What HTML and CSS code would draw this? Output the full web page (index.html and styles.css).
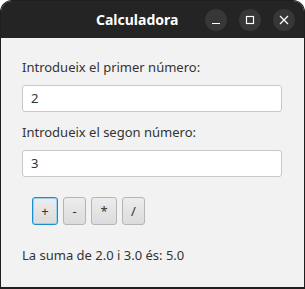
FILE: index.html
```html
<!DOCTYPE html>
<html lang="ca">
<head>
    <meta charset="UTF-8">
    <title>Calculadora</title>
    <link rel="stylesheet" href="styles.css">
</head>
<body>
    <div class="window">
        <header class="titlebar">
            <span class="title">Calculadora</span>
            <div class="controls">
                <span class="ctl">
                    <svg width="10" height="10" viewBox="0 0 10 10"><path d="M1 8.5h8" stroke="#fff" stroke-width="1.2"/></svg>
                </span>
                <span class="ctl">
                    <svg width="10" height="10" viewBox="0 0 10 10"><rect x="1.5" y="1.5" width="7" height="7" fill="none" stroke="#fff" stroke-width="1.2"/></svg>
                </span>
                <span class="ctl">
                    <svg width="10" height="10" viewBox="0 0 10 10"><path d="M1 1l8 8M9 1l-8 8" stroke="#fff" stroke-width="1.2"/></svg>
                </span>
            </div>
        </header>

        <section class="content">
            <label class="label">Introdueix el primer número:</label>
            <div class="field">2</div>

            <label class="label">Introdueix el segon número:</label>
            <div class="field">3</div>

            <div class="ops">
                <button class="op focused">+</button>
                <button class="op">-</button>
                <button class="op wide">*</button>
                <button class="op">/</button>
            </div>

            <p class="result">La suma de 2.0 i 3.0 és: 5.0</p>
        </section>
    </div>
</body>
</html>
```

FILE: styles.css
```css
body {
    margin: 0;
    padding: 0;
    background-color: #ffffff;
    font-family: "Noto Sans", "Open Sans", sans-serif;
}
.window {
    width: 305px;
    height: 289px;
    box-sizing: border-box;
    background-color: #f2f2f2;
    border: 1px solid #1f1f1f;
    border-bottom-width: 2px;
    border-radius: 12px 12px 0 0;
    overflow: hidden;
}
.titlebar {
    height: 37px;
    background-color: #242424;
    display: flex;
    align-items: center;
    position: relative;
}
.title {
    position: absolute;
    left: 95px;
    top: 9px;
    color: #ffffff;
    font-weight: bold;
    font-size: 14px;
}
.controls {
    margin-left: auto;
    margin-right: 9px;
    display: flex;
    gap: 12px;
}
.ctl {
    width: 22px;
    height: 22px;
    border-radius: 50%;
    background-color: #373737;
    display: flex;
    align-items: center;
    justify-content: center;
}
.content {
    padding: 20px 21px 0 21px;
    display: flex;
    flex-direction: column;
    align-items: flex-start;
}
.label {
    font-size: 13px;
    color: #333333;
    line-height: 18px;
}
.field {
    box-sizing: border-box;
    width: 260px;
    height: 27px;
    margin: 9px 0 11px 0;
    padding: 0 8px;
    background-color: #ffffff;
    border: 1px solid #c8c8c8;
    border-radius: 3px;
    font-size: 13px;
    line-height: 25px;
    color: #333333;
}
.ops {
    display: flex;
    gap: 5px;
    margin: 9px 0 0 10px;
}
.op {
    box-sizing: border-box;
    width: 23px;
    height: 28px;
    padding: 0;
    background: linear-gradient(#ececec, #dcdcdc);
    border: 1px solid #b5b5b5;
    border-radius: 3px;
    font-family: "Noto Sans", "Open Sans", sans-serif;
    font-size: 13px;
    color: #333333;
}
.op.wide {
    width: 26px;
}
.op.focused {
    width: 26px;
    border: 1px solid #1a8fd0;
    box-shadow: inset 0 0 0 1px #9ed0ee;
}
.result {
    margin: 21px 0 0 0;
    font-size: 13px;
    color: #333333;
}
```
